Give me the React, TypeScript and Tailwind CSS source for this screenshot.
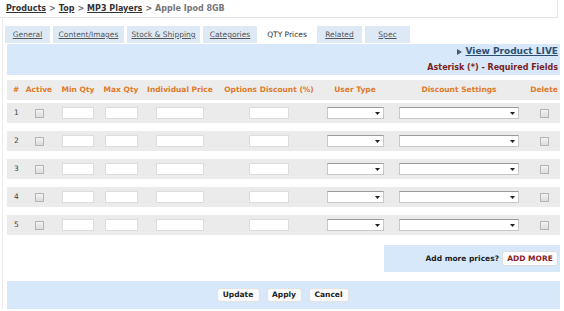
import React from "react";

const font = { fontFamily: '"DejaVu Sans", Verdana, sans-serif' };

function Check() {
  return (
    <span className="inline-block w-[9px] h-[9px] border border-[#b5b5b5] bg-[linear-gradient(#f4f4f4,#dcdcdc)]" />
  );
}

function Input({ w }: { w: string }) {
  return <span className={`inline-block h-[12px] bg-white border border-[#dcdcdc] ${w}`} />;
}

function Select({ w }: { w: string }) {
  return (
    <span className={`relative inline-flex items-center justify-end h-[12px] bg-white border border-[#c8c8c8] border-t-[#9a9a9a] ${w}`}>
      <svg width="5" height="3" viewBox="0 0 5 3" className="mr-[3px]">
        <path d="M0 0 L5 0 L2.5 3 Z" fill="#222" />
      </svg>
    </span>
  );
}

const cols = "grid grid-cols-[14px_36px_42px_44px_74px_104px_68px_140px_30px] items-center";

function Row({ n }: { n: number }) {
  return (
    <div className={`${cols} h-[20px] bg-[#ebebeb]`}>
      <div className="pl-[7px] text-[7.5px] text-[#444]">{n}</div>
      <div className="flex justify-center"><Check /></div>
      <div className="flex justify-center"><Input w="w-[32px]" /></div>
      <div className="flex justify-center"><Input w="w-[33px]" /></div>
      <div className="flex justify-center"><Input w="w-[48px]" /></div>
      <div className="flex justify-center"><Input w="w-[40px]" /></div>
      <div className="flex justify-center"><Select w="w-[57px]" /></div>
      <div className="flex justify-center"><Select w="w-[120px]" /></div>
      <div className="flex justify-center"><Check /></div>
    </div>
  );
}

function Tab({ label, w, active }: { label: string; w: string; active?: boolean }) {
  return (
    <div
      className={`h-[17px] flex items-center justify-center text-[7.5px] ${w} ${
        active ? "bg-white text-[#333]" : "bg-[#dde9f5] text-[#555] underline"
      }`}
    >
      {label}
    </div>
  );
}

function Btn({ label, w }: { label: string; w: string }) {
  return (
    <div className={`h-[14px] ${w} flex items-center justify-center bg-[#fafafa] border border-[#e2e2e2] rounded-[3px] text-[7.5px] font-bold text-[#222]`}>
      {label}
    </div>
  );
}

export default function App() {
  return (
    <div className="w-[564px] h-[311px] bg-white overflow-hidden relative" style={font}>
      {/* breadcrumb */}
      <div className="h-[18px] w-[558px] border-r border-b border-[#e4e4e4] flex items-center pl-[6px] text-[8px] font-bold text-[#444]">
        <span className="underline text-[#333]">Products</span>
        <span className="mx-[3px] text-[#666]">&gt;</span>
        <span className="underline text-[#333]">Top</span>
        <span className="mx-[3px] text-[#666]">&gt;</span>
        <span className="underline text-[#333]">MP3 Players</span>
        <span className="mx-[3px] text-[#666]">&gt;</span>
        <span className="text-[#777]">Apple Ipod 8GB</span>
      </div>

      <div className="ml-[2px] w-[558px] border-l border-[#ececec] pt-[8px]">
        {/* tabs */}
        <div className="flex gap-[3px] pl-[2px]">
          <Tab label="General" w="w-[45px]" />
          <Tab label="Content/Images" w="w-[71px]" />
          <Tab label="Stock & Shipping" w="w-[73px]" />
          <Tab label="Categories" w="w-[54px]" />
          <Tab label="QTY Prices" w="w-[54px]" active />
          <Tab label="Related" w="w-[45px]" />
          <Tab label="Spec" w="w-[45px]" />
        </div>

        {/* blue info panel */}
        <div className="ml-[4px] mt-[1px] h-[31px] bg-[#d6e8fa] flex flex-col items-end justify-center pr-[2px] gap-[3px]">
          <div className="flex items-center text-[9px] font-bold">
            <svg width="5" height="6" viewBox="0 0 5 6" className="mr-[4px]">
              <path d="M0 0 L5 3 L0 6 Z" fill="#4a5a70" />
            </svg>
            <span className="underline text-[#2d4f73]">View Product LIVE</span>
          </div>
          <div className="text-[8px] font-bold text-[#7a1f1f]">Asterisk (*) - Required Fields</div>
        </div>

        {/* table */}
        <div className="ml-[4px] mt-[5px]">
          <div className={`${cols} h-[20px] bg-[#ececec] text-[7.5px] font-bold text-[#e07a2a]`}>
            <div className="pl-[6px]">#</div>
            <div className="text-center">Active</div>
            <div className="text-center">Min Qty</div>
            <div className="text-center">Max Qty</div>
            <div className="text-center">Individual Price</div>
            <div className="text-center">Options Discount (%)</div>
            <div className="text-center">User Type</div>
            <div className="text-center">Discount Settings</div>
            <div className="text-center">Delete</div>
          </div>
          <div className="flex flex-col gap-[8px] mt-[3px]">
            {[1, 2, 3, 4, 5].map((n) => (
              <Row key={n} n={n} />
            ))}
          </div>
        </div>

        {/* add more */}
        <div className="flex justify-end mt-[10px]">
          <div className="w-[176px] h-[27px] bg-[#d6e8fa] flex items-center justify-end pr-[2px] gap-[3px]">
            <span className="text-[7.5px] font-bold text-[#222]">Add more prices?</span>
            <div className="h-[15px] w-[56px] flex items-center justify-center bg-white border border-[#dcdcdc] rounded-[3px] text-[7.5px] font-bold text-[#8a1a1a]">
              ADD MORE
            </div>
          </div>
        </div>

        {/* bottom bar */}
        <div className="ml-[4px] mt-[9px] h-[28px] bg-[#d6e8fa] flex items-center justify-center gap-[7px] pr-[2px]">
          <Btn label="Update" w="w-[43px]" />
          <Btn label="Apply" w="w-[35px]" />
          <Btn label="Cancel" w="w-[40px]" />
        </div>
      </div>
    </div>
  );
}
